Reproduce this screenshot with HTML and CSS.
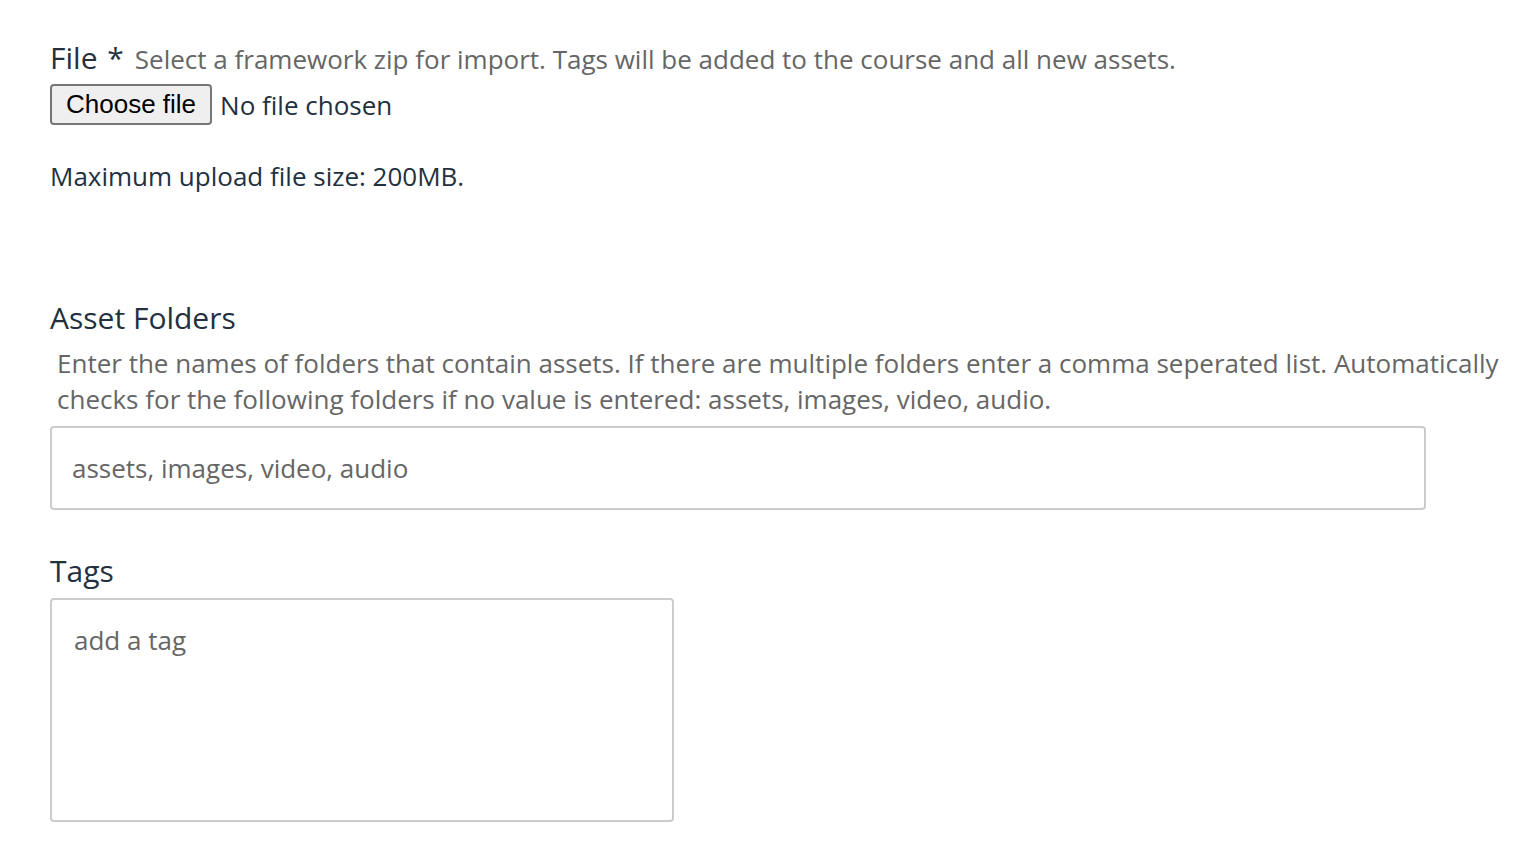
FILE: index.html
```html
<!DOCTYPE html>
<html>
<head>
<meta charset="utf-8">
<link rel="stylesheet" href="styles.css">
</head>
<body>
<form class="form">
  <div class="field field-file">
    <div class="label-row">
      <label class="label">File <span class="req">*</span></label>
      <span class="help-inline">Select a framework zip for import. Tags will be added to the course and all new assets.</span>
    </div>
    <div class="file-row">
      <button type="button" class="file-btn">Choose file</button>
      <span class="file-status">No file chosen</span>
    </div>
    <p class="max-size">Maximum upload file size: 200MB.</p>
  </div>

  <div class="field field-assets">
    <label class="label">Asset Folders</label>
    <p class="help">Enter the names of folders that contain assets. If there are multiple folders enter a comma seperated list. Automatically checks for the following folders if no value is entered: assets, images, video, audio.</p>
    <input class="text-input" type="text" placeholder="assets, images, video, audio">
  </div>

  <div class="field field-tags">
    <label class="label">Tags</label>
    <div class="tag-box"><span class="tag-placeholder">add a tag</span></div>
  </div>
</form>
</body>
</html>
```
FILE: styles.css
```css
html, body {
  margin: 0;
  padding: 0;
  background: #fff;
}
body {
  font-family: "Open Sans", sans-serif;
  color: #23313f;
}
.form {
  padding: 39px 0 0 50px;
}
.label-row {
  display: flex;
  align-items: baseline;
  gap: 11px;
}
.label {
  display: block;
  font-size: 30px;
  line-height: 38px;
  color: #23313f;
}
.req {
  margin-left: 2px;
}
.help-inline {
  font-size: 26px;
  color: #666;
}
.file-row {
  display: flex;
  align-items: center;
  gap: 8px;
  margin-top: 7px;
}
.file-btn {
  font-family: "Liberation Sans", Arial, sans-serif;
  font-size: 26px;
  color: #000;
  background: #efefef;
  border: 2px solid #767676;
  border-radius: 4px;
  height: 41px;
  padding: 0 14px;
  margin: 0;
}
.file-status {
  font-size: 26px;
  color: #23313f;
}
.max-size {
  margin: 32px 0 0;
  font-size: 26px;
  line-height: 38px;
  color: #23313f;
}
.field-assets {
  margin-top: 104px;
}
.help {
  margin: 8px 0 0 7px;
  font-size: 26px;
  line-height: 36px;
  color: #666;
  max-width: 1460px;
}
.text-input {
  display: block;
  box-sizing: border-box;
  width: 1376px;
  height: 84px;
  margin-top: 9px;
  border: 2px solid #ccc;
  border-radius: 4px;
  padding: 0 20px;
  font-family: "Open Sans", sans-serif;
  font-size: 26px;
  color: #23313f;
  outline: none;
}
.text-input::placeholder {
  color: #666;
}
.field-tags {
  margin-top: 42px;
}
.tag-box {
  box-sizing: border-box;
  width: 624px;
  height: 224px;
  margin-top: 8px;
  border: 2px solid #ccc;
  border-radius: 4px;
  padding: 22px 22px;
}
.tag-placeholder {
  font-size: 26px;
  line-height: 36px;
  color: #666;
}
```
